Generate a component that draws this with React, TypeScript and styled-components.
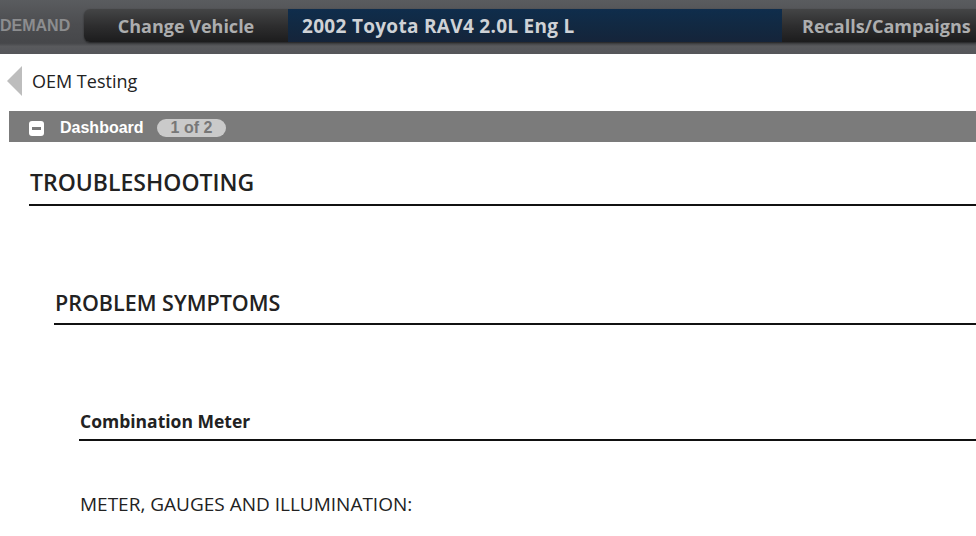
import * as React from 'react'
import styled, { createGlobalStyle } from 'styled-components'

const GlobalStyle = createGlobalStyle`
  html, body {
    margin: 0;
    padding: 0;
    background: #ffffff;
  }
  body {
    font-family: 'Open Sans', 'Noto Sans', Arial, sans-serif;
    color: #222;
  }
`

const App = () => (
  <Page>
    <GlobalStyle />
    <TopBar>
      <Brand>DEMAND</Brand>
      <NavGroup>
        <NavButton $first>Change Vehicle</NavButton>
        <VehicleField>2002 Toyota RAV4 2.0L Eng L</VehicleField>
        <NavButton>Recalls/Campaigns</NavButton>
      </NavGroup>
    </TopBar>
    <BackRow>
      <BackArrow />
      <BackLabel>OEM Testing</BackLabel>
    </BackRow>
    <SectionBar>
      <Collapse />
      <SectionTitle>Dashboard</SectionTitle>
      <Pager>1 of 2</Pager>
    </SectionBar>
    <Content>
      <Heading $level={1}>TROUBLESHOOTING</Heading>
      <Heading $level={2}>PROBLEM SYMPTOMS</Heading>
      <Heading $level={3}>Combination Meter</Heading>
      <BodyText>METER, GAUGES AND ILLUMINATION:</BodyText>
    </Content>
  </Page>
)

const Page = styled.div`
  width: 976px;
  min-height: 536px;
  overflow: hidden;
`

const TopBar = styled.header`
  height: 54px;
  display: flex;
  align-items: flex-start;
  padding-top: 9px;
  box-sizing: border-box;
  background: linear-gradient(180deg, #5a5c5f 0%, #4c4d50 45%, #46474a 80%, #595a5d 86%, #55565a 100%);
  overflow: hidden;
`

const Brand = styled.div`
  width: 84px;
  height: 33px;
  display: flex;
  align-items: center;
  font-family: 'Liberation Sans', Arial, sans-serif;
  font-weight: 700;
  font-size: 16px;
  color: #8c8d8f;
`

const NavGroup = styled.div`
  flex: 1;
  display: flex;
  height: 33px;
  border-radius: 6px 0 0 6px;
  overflow: hidden;
  box-shadow: 0 1px 2px rgba(0, 0, 0, 0.5);
`

const NavButton = styled.div<{ $first?: boolean }>`
  width: ${p => (p.$first ? '204px' : 'auto')};
  flex: ${p => (p.$first ? 'none' : '1')};
  padding-left: ${p => (p.$first ? '0' : '20px')};
  justify-content: ${p => (p.$first ? 'center' : 'flex-start')};
  display: flex;
  align-items: center;
  background: linear-gradient(180deg, #444546 0%, #2e2e2f 50%, #1c1c1d 100%);
  color: #adaeaf;
  font-weight: 700;
  font-size: 18px;
  white-space: nowrap;
`

const VehicleField = styled.div`
  width: 494px;
  padding-left: 14px;
  box-sizing: border-box;
  display: flex;
  align-items: center;
  background: linear-gradient(180deg, #0f2d4c 0%, #122840 60%, #15243a 100%);
  color: #cfd2d6;
  font-weight: 700;
  font-size: 19px;
  letter-spacing: 0.3px;
  white-space: nowrap;
`

const BackRow = styled.div`
  height: 56px;
  display: flex;
  align-items: center;
  padding-left: 7px;
  gap: 10px;
  padding-bottom: 2px;
  box-sizing: border-box;
`

const BackArrow = styled.div`
  width: 0;
  height: 0;
  border-top: 15px solid transparent;
  border-bottom: 15px solid transparent;
  border-right: 15px solid #bdbdbd;
`

const BackLabel = styled.span`
  font-size: 18px;
  color: #222;
`

const SectionBar = styled.div`
  margin: 1px 0 0 9px;
  height: 31px;
  box-sizing: border-box;
  padding: 3px 0 0 20px;
  background: #7b7b7b;
  display: flex;
  align-items: center;
`

const Collapse = styled.div`
  width: 15px;
  height: 15px;
  border-radius: 3px;
  background: #ffffff;
  position: relative;
  margin-right: 16px;
  &::after {
    content: '';
    position: absolute;
    left: 3px;
    right: 3px;
    top: 6px;
    height: 3px;
    background: #7b7b7b;
  }
`

const SectionTitle = styled.span`
  font-family: 'Liberation Sans', Arial, sans-serif;
  font-weight: 700;
  font-size: 16px;
  color: #ffffff;
  margin-right: 13px;
`

const Pager = styled.span`
  height: 18px;
  line-height: 18px;
  padding: 0 14px;
  border-radius: 9px;
  background: #cacaca;
  color: #777777;
  font-family: 'Liberation Sans', Arial, sans-serif;
  font-size: 16px;
  font-weight: 700;
`

const Content = styled.main`
  padding: 26px 0 0 29px;
  display: flex;
  flex-direction: column;
`

const headingSize = { 1: 23, 2: 21.5, 3: 17.5 }
const headingGap = { 1: 83, 2: 85, 3: 51 }

const Heading = styled.div<{ $level: 1 | 2 | 3 }>`
  margin-left: ${p => (p.$level - 1) * 25}px;
  margin-bottom: ${p => headingGap[p.$level]}px;
  padding: 0 0 6px 1px;
  border-bottom: 2px solid #111;
  font-weight: ${p => (p.$level === 3 ? 700 : 600)};
  font-size: ${p => headingSize[p.$level]}px;
  line-height: 1.3;
  color: #222;
`

const BodyText = styled.p`
  margin: 0 0 0 51px;
  font-size: 19px;
  line-height: 1.3;
  font-weight: 400;
  color: #222;
`

export default App
